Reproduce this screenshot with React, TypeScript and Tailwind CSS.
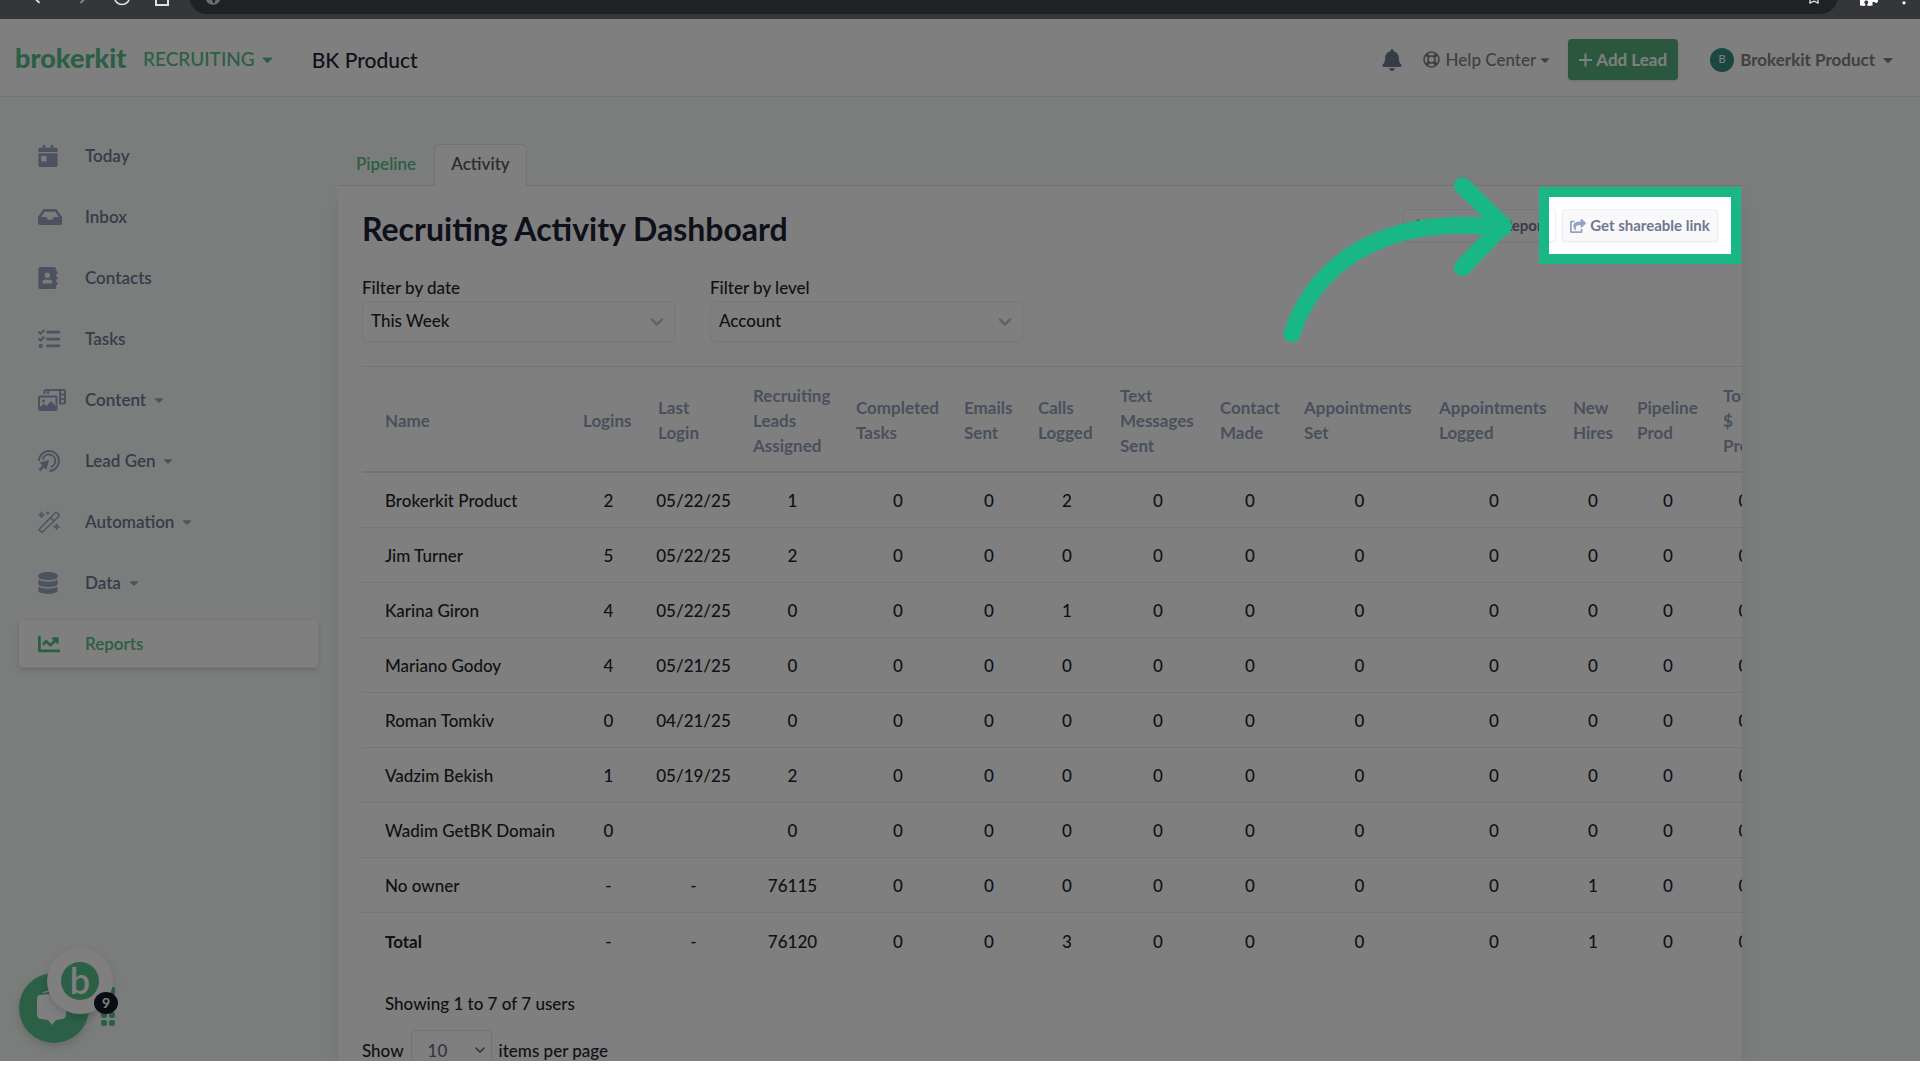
import type { ReactNode } from "react";
import {
  FaAddressBook,
  FaBell,
  FaCalendarDay,
  FaCaretDown,
  FaChartLine,
  FaDatabase,
  FaGlobeAmericas,
  FaInbox,
  FaPuzzlePiece,
  FaRegLifeRing,
  FaShareSquare,
  FaTasks,
} from "react-icons/fa";
import { ArrowLeft, ArrowRight, ChevronDown, EllipsisVertical, RotateCw, Settings, Star } from "lucide-react";

function HomeIcon() {
  return (
    <svg width="20" height="20" viewBox="0 0 20 20" fill="none" stroke="currentColor" strokeWidth="2">
      <path d="M4 18H16V8L10 3L4 8Z" />
    </svg>
  );
}

function PhotoFilmIcon() {
  return (
    <svg width="28" height="22" viewBox="0 0 28 22" fill="none" stroke="currentColor" strokeWidth="2">
      <path d="M6.500 5V2.500Q6.500 1 8 1H25.500Q27 1 27 2.500V13Q27 14.500 25.500 14.500H21" />
      <path d="M10 1.500V5M22 1V14M22 5.500H27M22 10H27" />
      <rect x="1" y="7.500" width="17.500" height="13.500" rx="1" />
      <path d="M2 20V18L6 14.500L8.500 17L13 12L18 17.500V20Z" fill="currentColor" stroke="none" />
      <circle cx="5.500" cy="12" r="1.500" fill="currentColor" stroke="none" />
    </svg>
  );
}

function BullseyePointerIcon() {
  return (
    <svg width="22" height="22" viewBox="0 0 22 22" fill="none" stroke="currentColor" strokeWidth="2">
      <path d="M1 11A10 10 0 1 1 11.500 21" />
      <path d="M4.800 9.500A6.300 6.300 0 1 1 12.500 17" />
      <path d="M1.500 12.500L11 10L8.500 20L6.300 17.600L2.500 21.500L0.500 19.500L4.300 15.600Z" fill="currentColor" stroke="none" />
    </svg>
  );
}

function WandIcon() {
  return (
    <svg width="22" height="22" viewBox="0 0 22 22" fill="none" stroke="currentColor" strokeWidth="1.500" strokeLinejoin="round">
      <path d="M1.300 18.200L17.200 1.700Q18 1 18.800 1.700L20.800 3.700Q21.500 4.500 20.800 5.200L4.800 20.800Q4 21.500 3.300 20.800L1.300 19.200Q0.800 18.700 1.300 18.200ZM12.500 6.500L16 10" />
      <path d="M3.500 1.200L4.200 3.100L6.200 3.800L4.200 4.500L3.500 6.500L2.800 4.500L0.800 3.800L2.800 3.100ZM18.500 13L19.200 15L21.200 15.700L19.200 16.400L18.500 18.400L17.800 16.400L15.800 15.700L17.800 15Z" strokeWidth="1.200" />
      <path d="M9.700 0.500V3.500M8.200 2H11.200" />
    </svg>
  );
}

interface NavItem {
  label: string;
  icon: ReactNode;
  menu?: boolean;
  active?: boolean;
}

const navItems: NavItem[] = [
  { label: "Today", icon: <FaCalendarDay size={22} className="-ml-px" /> },
  { label: "Inbox", icon: <FaInbox size={24} /> },
  { label: "Contacts", icon: <FaAddressBook size={22} className="-ml-px" /> },
  { label: "Tasks", icon: <FaTasks size={22} /> },
  { label: "Content", icon: <PhotoFilmIcon />, menu: true },
  { label: "Lead Gen", icon: <BullseyePointerIcon />, menu: true },
  { label: "Automation", icon: <WandIcon />, menu: true },
  { label: "Data", icon: <FaDatabase size={22} className="-ml-px" />, menu: true },
  { label: "Reports", icon: <FaChartLine size={22} />, active: true },
];

const columns = [
  { title: ["Name"], width: "w-[209px]" },
  { title: ["Logins"], width: "w-[75px]" },
  { title: ["Last", "Login"], width: "w-[95px]" },
  { title: ["Recruiting", "Leads", "Assigned"], width: "w-[103px]" },
  { title: ["Completed", "Tasks"], width: "w-[108px]" },
  { title: ["Emails", "Sent"], width: "w-[74px]" },
  { title: ["Calls", "Logged"], width: "w-[82px]" },
  { title: ["Text", "Messages", "Sent"], width: "w-[100px]" },
  { title: ["Contact", "Made"], width: "w-[84px]" },
  { title: ["Appointments", "Set"], width: "w-[135px]" },
  { title: ["Appointments", "Logged"], width: "w-[134px]" },
  { title: ["New", "Hires"], width: "w-[64px]" },
  { title: ["Pipeline", "Prod"], width: "w-[86px]" },
  { title: ["Total", "$", "Prod"], width: "w-[65px]" },
];

const rows = [
  ["Brokerkit Product", "2", "05/22/25", "1", "0", "0", "2", "0", "0", "0", "0", "0", "0", "0"],
  ["Jim Turner", "5", "05/22/25", "2", "0", "0", "0", "0", "0", "0", "0", "0", "0", "0"],
  ["Karina Giron", "4", "05/22/25", "0", "0", "0", "1", "0", "0", "0", "0", "0", "0", "0"],
  ["Mariano Godoy", "4", "05/21/25", "0", "0", "0", "0", "0", "0", "0", "0", "0", "0", "0"],
  ["Roman Tomkiv", "0", "04/21/25", "0", "0", "0", "0", "0", "0", "0", "0", "0", "0", "0"],
  ["Vadzim Bekish", "1", "05/19/25", "2", "0", "0", "0", "0", "0", "0", "0", "0", "0", "0"],
  ["Wadim GetBK Domain", "0", "", "0", "0", "0", "0", "0", "0", "0", "0", "0", "0", "0"],
  ["No owner", "-", "-", "76115", "0", "0", "0", "0", "0", "0", "0", "1", "0", "0"],
  ["Total", "-", "-", "76120", "0", "0", "3", "0", "0", "0", "0", "1", "0", "0"],
];

function BrowserBar() {
  return (
    <div className="relative z-40 flex h-[19px] shrink-0 items-end overflow-hidden bg-[#35363a] text-[#dfe0e2]">
      <div className="flex w-[189px] shrink-0 items-end gap-5 pb-3 pl-7">
        <ArrowLeft size={22} />
        <ArrowRight size={22} className="text-[#8b8c8f]" />
        <RotateCw size={20} />
        <HomeIcon />
      </div>
      <div className="mb-[5px] flex h-9 flex-1 items-end justify-between rounded-full bg-[#202124] px-4 pb-[9px]">
        <FaGlobeAmericas size={16} className="text-[#6b6c6f]" />
        <Star size={16} />
      </div>
      <div className="flex w-[82px] items-end gap-4 pb-3 pl-[22px] text-white">
        <FaPuzzlePiece size={18} />
        <EllipsisVertical size={20} />
      </div>
    </div>
  );
}

function Header() {
  return (
    <header className="flex h-[78px] shrink-0 items-center border-b border-[#e6eae8] bg-white pt-1 pr-6 pl-[15px]">
      <a href="#" className="w-28 pb-1 text-[27px] leading-8 font-black text-[#58bd88]">
        brokerkit
      </a>
      <button type="button" className="ml-4 flex items-center gap-1 text-[19px] text-[#58bd88]">
        RECRUITING
        <FaCaretDown size={17} />
      </button>
      <span className="ml-9 text-[21px] font-medium text-[#1e2234]">BK Product</span>
      <div className="ml-auto flex items-center text-[#808084]">
        <button type="button" aria-label="Notifications" className="text-[#6e7891]">
          <FaBell size={22} />
        </button>
        <button type="button" className="ml-5 flex items-center gap-1.5 font-medium">
          <FaRegLifeRing size={17} />
          Help Center
          <FaCaretDown size={14} className="-ml-1" />
        </button>
        <button
          type="button"
          className="ml-4 flex h-[41px] w-[110px] items-center justify-center gap-1 rounded bg-[#56ae7d] font-bold text-white shadow-sm"
        >
          <svg width="13" height="14" viewBox="0 0 13 14" stroke="currentColor" strokeWidth="2">
            <path d="M6.500 0.500V13.500M0 7H13" />
          </svg>
          Add Lead
        </button>
        <button type="button" className="ml-8 flex items-center gap-1.5 font-bold">
          <span className="flex size-6 items-center justify-center rounded-full bg-[#349080] text-[11px] font-normal text-white">
            B
          </span>
          Brokerkit Product
          <FaCaretDown size={16} className="-ml-px" />
        </button>
      </div>
    </header>
  );
}

function Sidebar() {
  return (
    <nav className="flex w-[338px] shrink-0 flex-col gap-3 pt-[34px] pr-[19px] pl-[18px]">
      {navItems.map((item) => (
        <a
          key={item.label}
          href="#"
          className={
            item.active
              ? "flex h-[49px] items-center rounded border border-[#eceeed] bg-white pl-[19px] text-[#58bd88] shadow-md"
              : "flex h-[49px] items-center pl-5 text-[#9aa5c0]"
          }
        >
          <span className="flex w-[47px] shrink-0">{item.icon}</span>
          <span className={item.active ? "font-semibold" : "font-semibold text-[#6e7891]"}>{item.label}</span>
          {item.menu && <FaCaretDown size={14} className="ml-1.5" />}
        </a>
      ))}
    </nav>
  );
}

function Filter({ id, label, value }: { id: string; label: string; value: string }) {
  return (
    <div className="w-[313px]">
      <label htmlFor={id} className="block h-[25px] leading-6">
        {label}
      </label>
      <div className="relative">
        <select
          id={id}
          className="h-[41px] w-full appearance-none rounded-md border border-[#eceef3] bg-white px-2 pb-0.5 shadow-xs"
        >
          <option>{value}</option>
        </select>
        <ChevronDown size={20} strokeWidth={3} className="absolute top-[11px] right-2 text-[#c6c6c6]" />
      </div>
    </div>
  );
}

// Dims everything but the share button and points at it
function Spotlight() {
  return (
    <>
      <div className="pointer-events-none absolute -inset-x-[13px] -inset-y-3 z-30 shadow-[0_0_0_3000px_rgba(0,0,0,0.5)]" />
      <div className="pointer-events-none absolute -inset-x-[23px] -inset-y-[22px] z-30 border-10 border-[#19b785]" />
      <svg
        width="230"
        height="166"
        viewBox="70 80 690 498"
        fill="none"
        stroke="#19b785"
        strokeWidth="51"
        strokeLinecap="round"
        strokeLinejoin="round"
        className="pointer-events-none absolute -top-8 right-[205px] z-30"
      >
        <path d="M97 550C150 385 320 185 730 232" />
        <path d="M608 106L730 224L608 352" />
      </svg>
    </>
  );
}

function ActivityTable() {
  return (
    <div className="mt-6 -mr-6 overflow-hidden border-t border-[#e4e6ea]">
      <table className="w-[1414px] table-fixed border-separate border-spacing-0">
        <thead>
          <tr className="h-[106px] text-left text-[#959fba]">
            {columns.map((col, i) => (
              <th
                key={i}
                className={`${col.width} border-b-2 border-[#e2e4e8] pt-0.5 pr-0 leading-[25px] font-bold ${i === 0 ? "pl-[23px]" : "pl-3"}`}
              >
                {col.title.map((line) => (
                  <span key={line} className="block">
                    {line}
                  </span>
                ))}
              </th>
            ))}
          </tr>
        </thead>
        <tbody>
          {rows.map((row, r) => (
            <tr key={row[0]} className="group h-[55px]">
              {row.map((cell, i) => (
                <td
                  key={i}
                  className={`border-b border-[#e9ebef] pt-0.5 group-last:border-0 ${i === 0 ? "pl-[23px] text-left" : "text-center"} ${
                    i === 0 && r === rows.length - 1 ? "font-bold" : ""
                  }`}
                >
                  {cell}
                </td>
              ))}
            </tr>
          ))}
        </tbody>
      </table>
    </div>
  );
}

function ChatWidget() {
  return (
    <div className="absolute bottom-0 left-0 z-10">
      <button type="button" aria-label="Open chat" className="block">
        <svg width="130" height="130" viewBox="0 0 130 130">
          <g fill="#58c08c">
            <rect x="101" y="68" width="6" height="6" rx="2" />
            <rect x="109" y="56" width="6" height="8" rx="2" />
            <rect x="101" y="81" width="6" height="6" rx="2" />
            <rect x="109" y="81" width="6" height="6" rx="2" />
            <rect x="101" y="89" width="6" height="6" rx="2" />
            <rect x="109" y="89" width="6" height="6" rx="2" />
          </g>
          <circle cx="54" cy="77" r="35" fill="#58c08c" className="drop-shadow-lg" />
          <path
            d="M40 64Q51 62 62 64Q66 65 66 69V83Q66 88 62 88L56 89L52 94L48 89L41 88Q37 88 37 83V69Q37 64 40 64ZM43 61Q51 58 60 61V62Q51 60 43 62Z"
            fill="#fff"
          />
          <circle cx="80" cy="50" r="33" fill="#fff" className="drop-shadow-lg" />
          <circle cx="80" cy="50" r="19" fill="#58c08c" />
          <text x="80" y="63" textAnchor="middle" fontSize="36" fontWeight="600" fill="#fff">
            b
          </text>
          <ellipse cx="106" cy="72" rx="12" ry="11" fill="#141628" />
          <text x="106" y="77" textAnchor="middle" fontSize="14" fontWeight="700" fill="#fff">
            9
          </text>
        </svg>
      </button>
    </div>
  );
}

export default function App() {
  return (
    <div className="flex h-screen flex-col bg-white pb-[19px] font-['Lato',sans-serif] text-[17px] font-medium text-[#212529]">
      <div className="relative flex min-h-0 flex-1 flex-col overflow-hidden bg-[#f6faf8]">
        <BrowserBar />
        <Header />
        <div className="flex min-h-0 flex-1">
          <Sidebar />
          <main className="mr-[178px] min-w-0 flex-1 pt-[47px]">
            <div className="flex h-[41px]">
              <a href="#" className="flex w-24 items-center justify-center pb-0.5 font-semibold text-[#58bd88]">
                Pipeline
              </a>
              <a
                href="#"
                className="relative z-1 -mb-px flex w-[93px] items-center justify-center rounded-t-md border border-b-0 border-[#e2e6e4] bg-white pb-1 font-semibold text-[#55585f]"
              >
                Activity
              </a>
            </div>
            <section className="border-t border-[#e2e6e4] bg-white px-6 pt-[23px] pb-6 shadow-lg">
              <div className="mb-[27px] flex h-10 items-start justify-between">
                <h1 className="text-[32px] leading-10 font-bold text-[#1e2234]">Recruiting Activity Dashboard</h1>
                <div className="flex gap-1.5 text-[15px] font-bold text-[#6e7891]">
                  <button
                    type="button"
                    className="flex h-[33px] w-[153px] items-center justify-center gap-1 rounded border border-[#eceef3] bg-white shadow-xs"
                  >
                    <Settings size={14} />
                    Customize Report
                  </button>
                  <div className="relative">
                    <button
                      type="button"
                      className="flex h-[33px] w-[156px] items-center justify-center gap-1 rounded border border-[#eceef5] bg-[#f9f9fc] shadow-xs"
                    >
                      <FaShareSquare size={16} className="text-[#95a3c1]" />
                      Get shareable link
                    </button>
                    <Spotlight />
                  </div>
                </div>
              </div>
              <div className="flex gap-[35px]">
                <Filter id="filter-date" label="Filter by date" value="This Week" />
                <Filter id="filter-level" label="Filter by level" value="Account" />
              </div>
              <ActivityTable />
              <p className="mt-6 pl-[23px] leading-6">Showing 1 to 7 of 7 users</p>
              <div className="mt-[14px] flex items-center gap-[7px]">
                <label htmlFor="page-size">Show</label>
                <div className="relative">
                  <select
                    id="page-size"
                    className="h-[41px] w-[81px] appearance-none rounded border border-[#e4e6ea] bg-white pl-4 text-[#6e7076]"
                  >
                    <option>10</option>
                  </select>
                  <ChevronDown size={16} strokeWidth={2} className="absolute top-3 right-1 text-[#55585f]" />
                </div>
                <span>items per page</span>
              </div>
            </section>
          </main>
        </div>
        <ChatWidget />
      </div>
    </div>
  );
}
